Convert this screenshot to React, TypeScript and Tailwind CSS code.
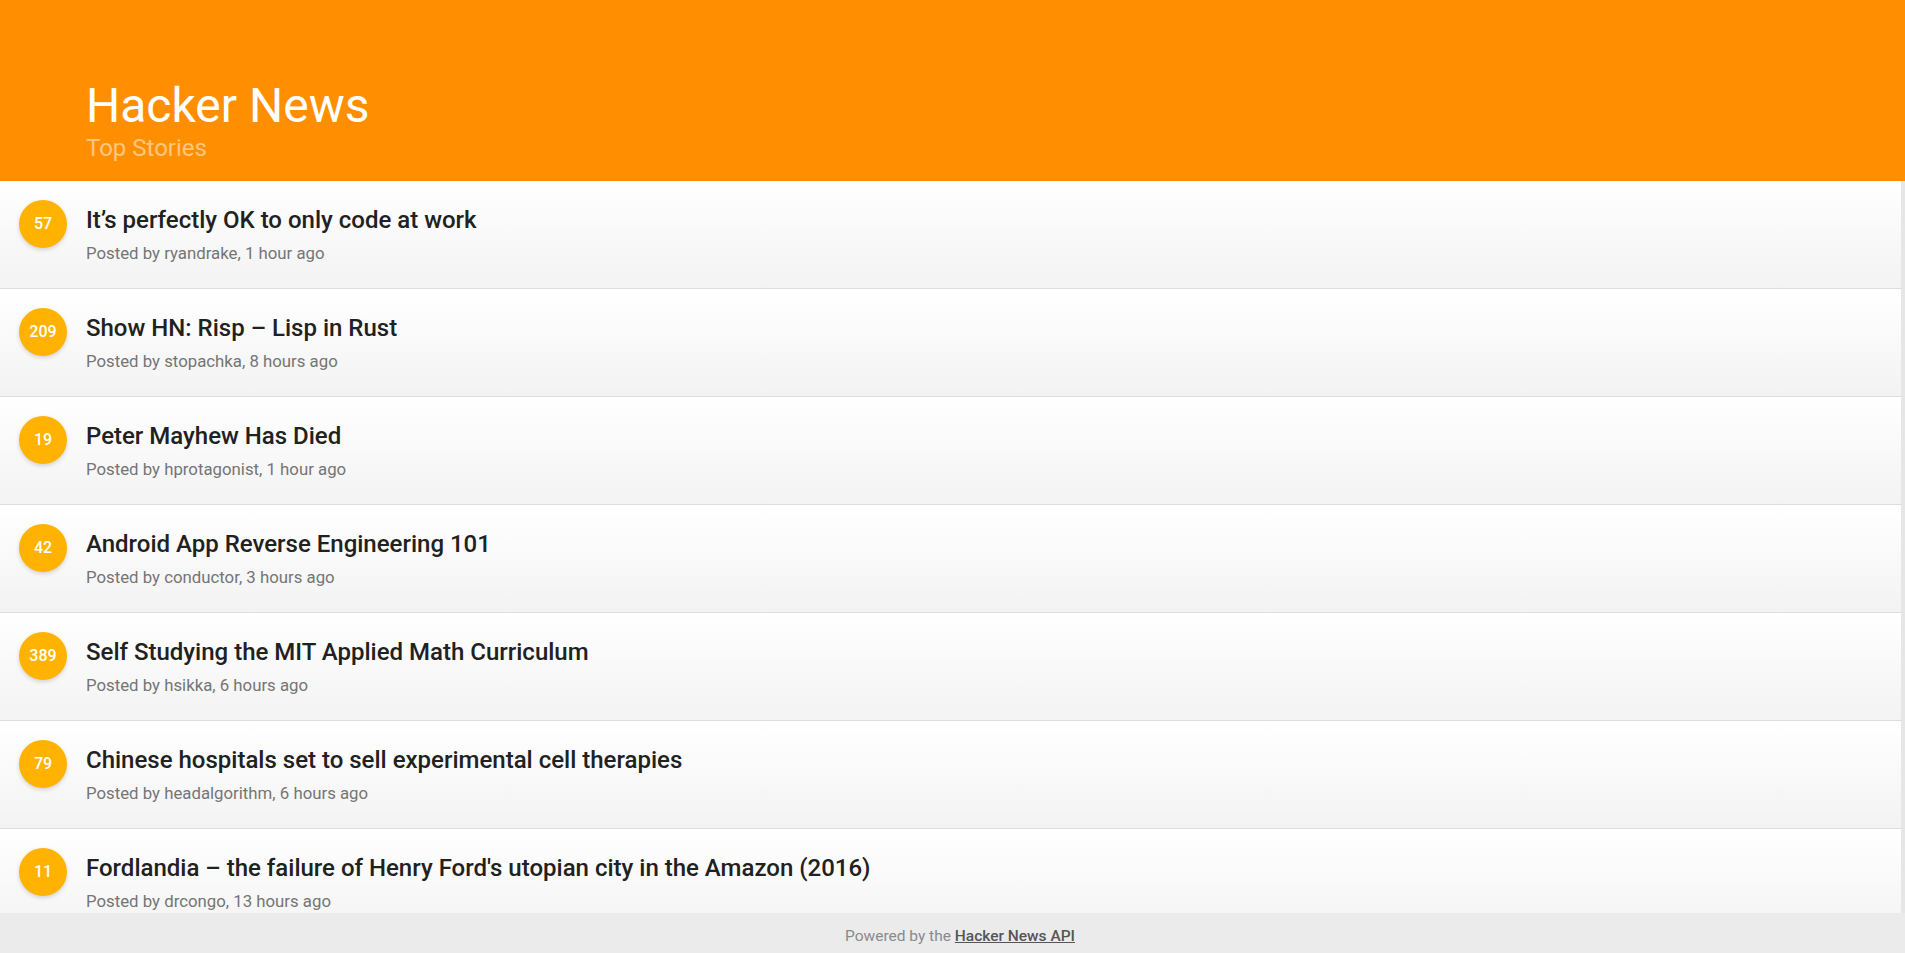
import React from "react";

const stories = [
  { score: 57, title: "It’s perfectly OK to only code at work", by: "ryandrake", time: "1 hour ago" },
  { score: 209, title: "Show HN: Risp – Lisp in Rust", by: "stopachka", time: "8 hours ago" },
  { score: 19, title: "Peter Mayhew Has Died", by: "hprotagonist", time: "1 hour ago" },
  { score: 42, title: "Android App Reverse Engineering 101", by: "conductor", time: "3 hours ago" },
  { score: 389, title: "Self Studying the MIT Applied Math Curriculum", by: "hsikka", time: "6 hours ago" },
  { score: 79, title: "Chinese hospitals set to sell experimental cell therapies", by: "headalgorithm", time: "6 hours ago" },
  { score: 11, title: "Fordlandia – the failure of Henry Ford's utopian city in the Amazon (2016)", by: "drcongo", time: "13 hours ago" },
];

const StoryRow = ({ score, title, by, time }: (typeof stories)[number]) => {
  return (
    <div className="flex h-[108px] shrink-0 border-b border-[#dddddd] bg-gradient-to-b from-white to-[#f3f3f3] pl-[19px]">
      <div className="mt-[19px] flex h-12 w-12 shrink-0 items-center justify-center rounded-full bg-[#ffb300] text-base font-medium text-white shadow-[0_2px_4px_rgba(0,0,0,0.15)]">
        {score}
      </div>
      <div className="ml-[19px] flex flex-col pt-[23px]">
        <h2 className="text-2xl font-medium text-[#212121]">{title}</h2>
        <p className="mt-[5px] text-[16.8px] leading-6 text-[#757575]">
          Posted by {by}, {time}
        </p>
      </div>
    </div>
  );
};

const App = () => {
  return (
    <div className="flex h-screen flex-col overflow-hidden font-['Roboto',sans-serif]">
      <header className="h-[181px] shrink-0 bg-[#ff8f00] pl-[86px] pt-[82px]">
        <h1 className="text-5xl font-normal text-white">Hacker News</h1>
        <p className="mt-[2px] text-2xl text-white/50">Top Stories</p>
      </header>

      <div className="flex min-h-0 flex-1">
        <div className="flex min-w-0 flex-1 flex-col overflow-hidden">
          {stories.map((s) => (
            <StoryRow key={s.score} {...s} />
          ))}
        </div>
        <div className="w-1 shrink-0 bg-[#e6e6e6]" />
      </div>

      <footer className="h-10 shrink-0 bg-[#ebebeb] pl-[15px] pt-3 text-center text-[15.5px] text-[#8a8a8a]">
        Powered by the{" "}
        <a href="#" className="font-medium text-[#555555] underline">
          Hacker News API
        </a>
      </footer>
    </div>
  );
};

export default App;
